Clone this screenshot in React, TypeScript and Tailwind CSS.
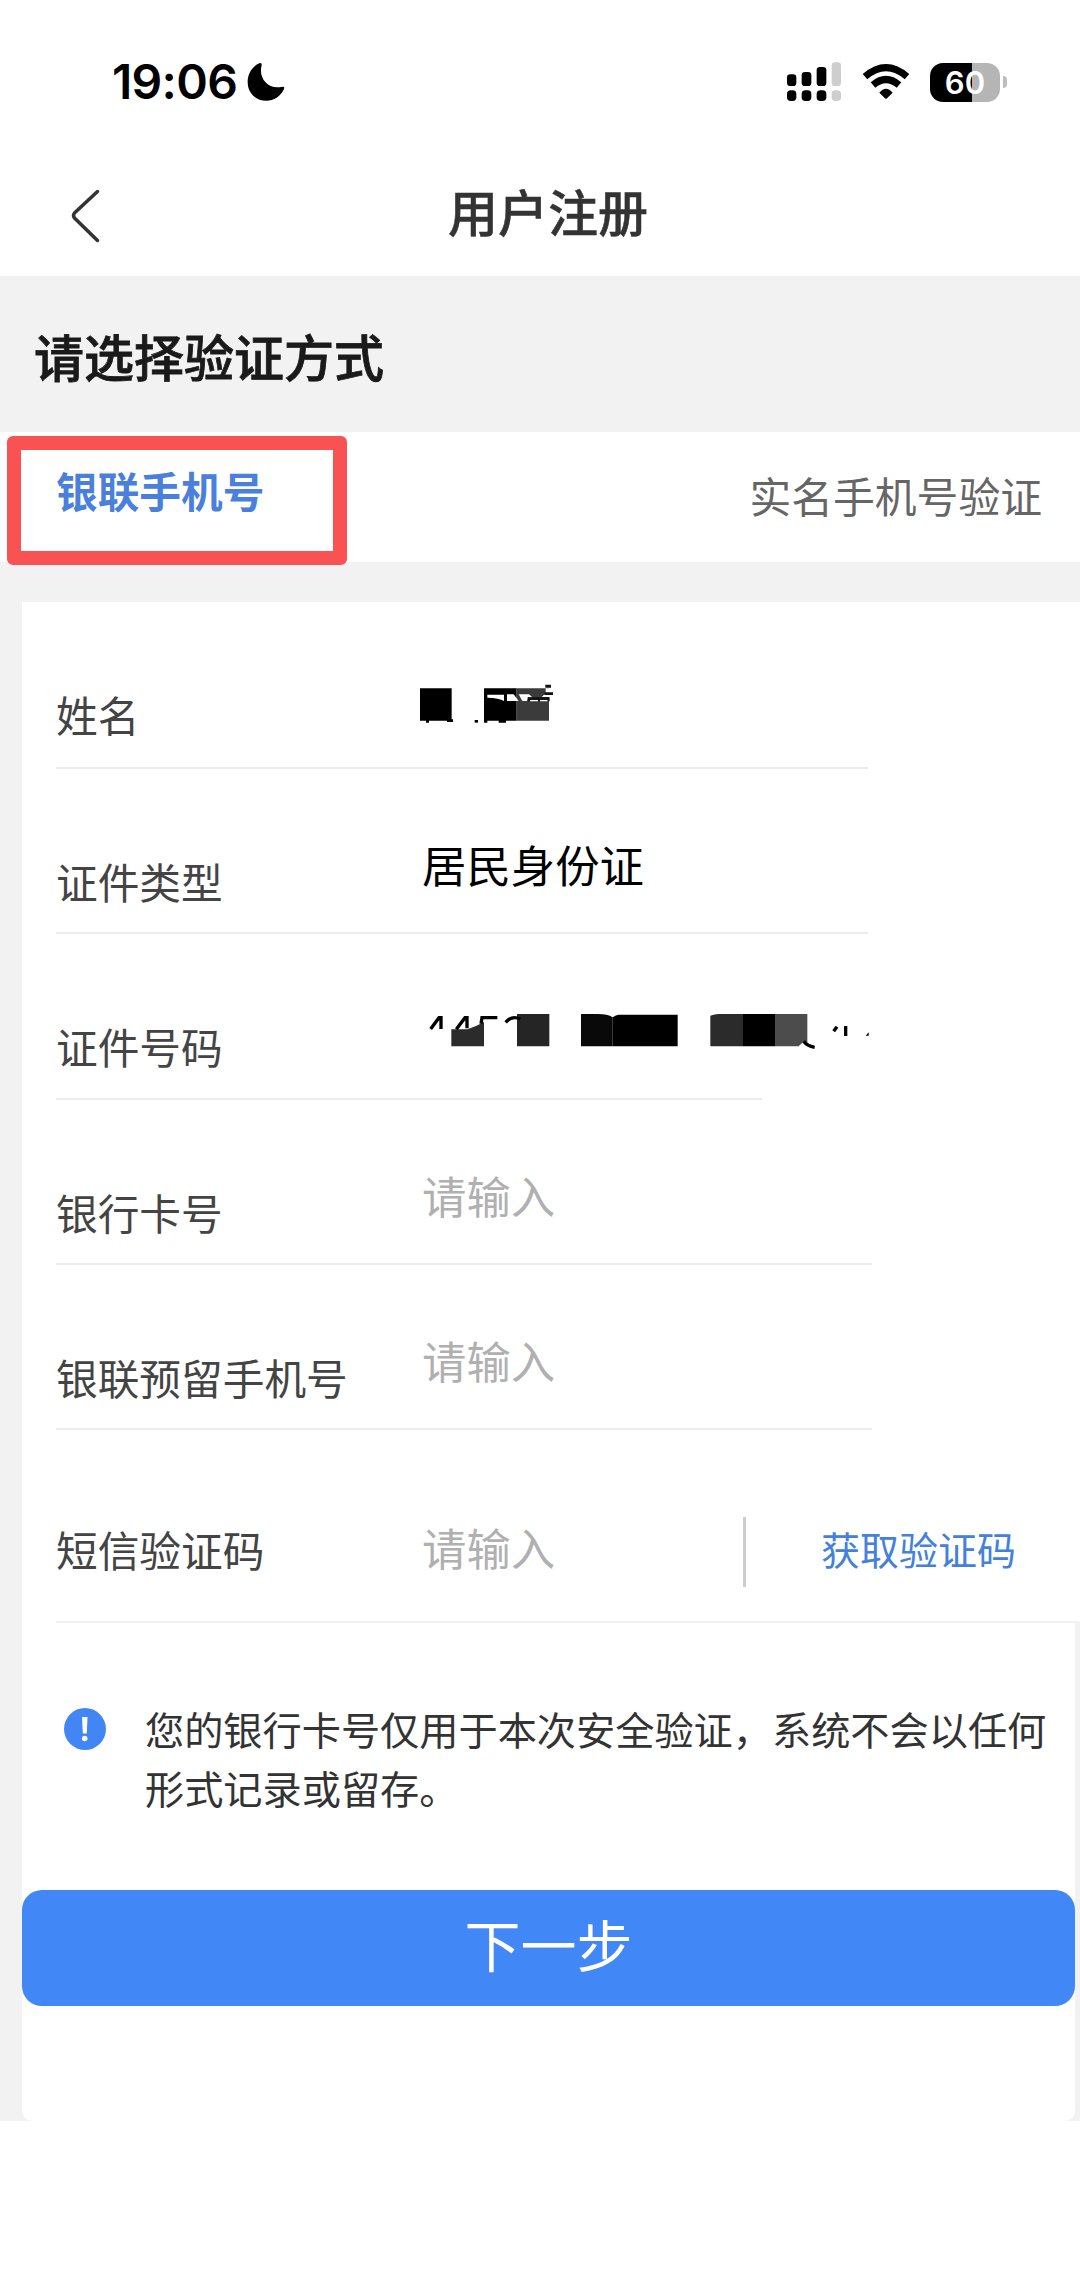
import type { ReactNode } from 'react'
import clsx from 'clsx'

function SignalIcon() {
  return (
    <svg width="55" height="40" viewBox="53 65 165 120">
      <g fill="#000">
        <rect x="53" y="102" width="28" height="35" rx="10" />
        <rect x="97" y="95" width="29" height="42" rx="10" />
        <rect x="142" y="80" width="29" height="57" rx="10" />
        <rect x="53" y="150" width="28" height="32" rx="11" />
        <rect x="97" y="150" width="29" height="32" rx="11" />
        <rect x="142" y="150" width="29" height="32" rx="11" />
      </g>
      <g fill="#cecece">
        <rect x="187" y="66" width="28" height="71" rx="10" />
        <rect x="187" y="150" width="28" height="32" rx="11" />
      </g>
    </svg>
  )
}

function WifiIcon() {
  return (
    <svg width="48" height="40" viewBox="276 65 144 120">
      <path d="M285 109 Q348 55 411 109" fill="none" stroke="#000" strokeWidth="21" />
      <path d="M309 134 Q348 101 387 134" fill="none" stroke="#000" strokeWidth="21" />
      <path
        d="M328 157 Q348 133 368 157 L351 174 Q348 177 345 174 Z"
        fill="#000"
      />
    </svg>
  )
}

function Battery() {
  return (
    <div className="flex items-center gap-[3px]">
      <div className="flex h-[39px] w-[70px] items-center justify-center rounded-[13px] bg-[linear-gradient(90deg,#000_42px,#b5b5b5_42px)] font-[Inter] text-[31px] leading-[39px] font-semibold text-white">
        60
      </div>
      <div className="h-3 w-1 rounded-r-full bg-[#bdbdbd]" />
    </div>
  )
}

function StatusBar() {
  return (
    <div className="flex h-[164px] items-center justify-between pr-[73px] pl-[112px]">
      <div className="flex items-center gap-[10px]">
        <span className="font-[Inter] text-[48px] leading-[60px] font-semibold tracking-[-0.7px]">
          19:06
        </span>
        <svg width="38" height="40" viewBox="474 66 114 120">
          <path
            d="M513 69 Q519 68 518 76 C507 116 539 151 580 140 Q588 139 585 147 C574 170 555 182 532 182 C499 182 476 158 476 126 C476 100 490 78 513 69 Z"
            fill="#000"
          />
        </svg>
      </div>
      <div className="flex items-center">
        <SignalIcon />
        <div className="ml-[20px]">
          <WifiIcon />
        </div>
        <div className="ml-[20px]">
          <Battery />
        </div>
      </div>
    </div>
  )
}

// Mosaic left over the hidden name, with bits of the strokes showing
function HiddenName() {
  return (
    <svg width="134" height="44" viewBox="60 68 402 132">
      <path d="M60 84h95v93h4v8h-18v-4h-54v6h-9v-6H60z" fill="#000" />
      <path d="M224 179h10v8h-10z" fill="#000" />
      <path d="M252 84h98v97h-32v6h-22v-6h-34v6h-10z" fill="#000" />
      <path d="M350 84h97v97h-97z" fill="#3b3b3b" />
      <path
        d="M262 103h50v19q-14-9-50-10zM321 102h20l15 20h-35zM356 102h31l10 9h-14l-2 11h-14z"
        fill="#fff"
      />
      <path d="M437 84h10v26h-22q8-6 12-14z" fill="#fff" />
      <path d="M390 119h24v4h-24zM420 119h22v4h-22z" fill="#fff" />
      <path d="M436 73h17v9h-17zM433 96h26v8h-26zM384 111h65v12h-5v-5h-24v5h-6v-5h-24v5h-6z" fill="#111" />
    </svg>
  )
}

function HiddenIdNumber() {
  return (
    <svg width="448" height="40" viewBox="66 66 1344 120">
      <path d="M154 118h48q20-6 50-22v73h-98z" fill="#2b2b2b" />
      <path d="M351 72h97v97h-97z" fill="#252525" />
      <path d="M543 72h50q30 0 45 10v87h-95z" fill="#090909" />
      <path d="M638 82q10-8 18-8h177v95H638z" fill="#000" />
      <path d="M931 77q12-5 25-5h73v97h-98z" fill="#2b2b2b" />
      <path d="M1029 72h96v97h-96z" fill="#000" />
      <path d="M1125 72h97v85l-12-2-14 14h-71z" fill="#4c4c4c" />
      <g fill="none" stroke="#000" strokeWidth="10">
        <path d="M92 117l25-34h6v34" />
        <path d="M169 118l26-35h6v32" />
        <path d="M292 83h-46l-3 18" />
        <path d="M317 97q18-22 44-10" />
        <path d="M1211 154q10 14 33 18" />
        <path d="M1301 124l10-14M1337 108v30" />
      </g>
      <path d="M1397 137l9-10v10z" fill="#000" />
    </svg>
  )
}

type RowProps = {
  label: string
  className: string
  valueClassName?: string
  children: ReactNode
}

function Row({ label, className, valueClassName, children }: RowProps) {
  return (
    <div className={clsx('flex border-b-2 border-[#ececec]', className)}>
      <div className="w-[366px] shrink-0 pt-[82px] text-[41.7px] leading-[60px] text-[#444]">
        {label}
      </div>
      <div className={clsx('text-[44.4px] leading-[60px]', valueClassName ?? 'pt-[65px]')}>
        {children}
      </div>
    </div>
  )
}

function Placeholder() {
  return <span className="text-[#b0b0b0]">请输入</span>
}

function Tabs() {
  return (
    <div className="relative flex h-[130px] justify-between bg-white pr-[38px] pl-[56px]">
      <div className="pt-[28px] text-[41.7px] leading-[60px] font-bold text-[#4a80dc]">
        银联手机号
      </div>
      <div className="pt-[33px] text-[41.8px] leading-[60px] text-[#666]">
        实名手机号验证
      </div>
      <div className="absolute top-[4px] left-[7px] h-[129px] w-[340px] rounded-[6px] border-[14px] border-[#f95252]" />
    </div>
  )
}

export default function App() {
  return (
    <div className="flex h-[2294px] w-[1080px] flex-col overflow-hidden bg-white font-['Noto_Sans_CJK_SC','Noto_Sans',sans-serif] text-black">
      <StatusBar />
      <header className="flex h-[112px] items-start">
        <svg className="mt-[25px] ml-[70px]" width="32" height="54" viewBox="0 0 32 54">
          <path
            d="M27.500 2.500L4.500 24Q2.500 26.500 4.500 29L27.500 51.500"
            fill="none"
            stroke="#333"
            strokeWidth="3.500"
            strokeLinecap="round"
          />
        </svg>
        <h1 className="ml-[346px] pt-[16px] text-[50px] leading-[60px] font-medium text-[#333] [-webkit-text-stroke:0.5px_#333]">
          用户注册
        </h1>
      </header>

      <main className="h-[1845px] bg-[#f2f2f2]">
        <h2 className="h-[156px] pt-[49px] pl-[34px] text-[50px] leading-[60px] font-medium text-[#1a1a1a] [-webkit-text-stroke:0.8px_#1a1a1a]">
          请选择验证方式
        </h2>
        <Tabs />

        <div className="mt-[40px] ml-[22px]">
          <div className="bg-white pl-[34px]">
            <Row label="姓名" className="h-[167px] w-[812px]" valueClassName="pt-[81px] -ml-[2px]">
              <HiddenName />
            </Row>
            <Row label="证件类型" className="h-[165px] w-[812px]">
              居民身份证
            </Row>
            <Row label="证件号码" className="h-[166px] w-[706px]" valueClassName="pt-[78px]">
              <HiddenIdNumber />
            </Row>
            <Row label="银行卡号" className="h-[165px] w-[816px]">
              <Placeholder />
            </Row>
            <Row label="银联预留手机号" className="h-[165px] w-[816px]">
              <Placeholder />
            </Row>
            <div className="flex h-[193px] border-b-2 border-[#f0f0f0] pt-[87px]">
              <div className="w-[366px] pt-[2px] text-[41.7px] leading-[60px] text-[#444]">
                短信验证码
              </div>
              <div className="w-[321px] text-[44.4px] leading-[60px]">
                <Placeholder />
              </div>
              <div className="h-[70px] w-[3px] bg-[#ccc]" />
              <div className="pt-px pl-[75px] text-[39px] leading-[60px] text-[#4381dc]">
                获取验证码
              </div>
            </div>
          </div>

          <div className="mr-[5px] h-[498px] rounded-b-[10px] bg-white">
            <div className="flex h-[267px] pt-[76px] pl-[42px]">
              <svg className="mt-[9px]" width="42" height="42" viewBox="0 0 42 42">
                <circle cx="21" cy="21" r="21" fill="#4285f4" />
                <path d="M18 9h5.500l-.7 16.500h-4z" fill="#fff" />
                <circle cx="20.700" cy="30.500" r="2.800" fill="#fff" />
              </svg>
              <p className="pl-[39px] text-[39.2px] leading-[58.5px] whitespace-nowrap text-[#333]">
                您的银行卡号仅用于本次安全验证，系统不会以任何
                <br />
                形式记录或留存。
              </p>
            </div>
            <button className="block h-[116px] w-full rounded-[20px] bg-[#4187f6] pb-[10px] text-[56px] leading-[106px] font-normal text-white">
              下一步
            </button>
          </div>
        </div>
      </main>
    </div>
  )
}
